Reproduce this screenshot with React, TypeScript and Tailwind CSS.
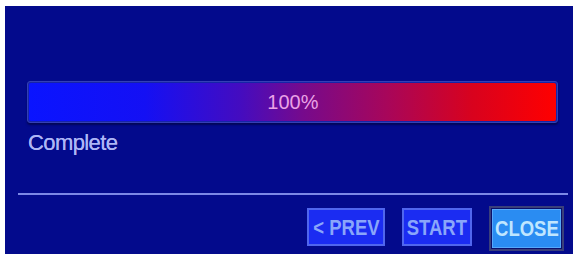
import React from "react";

export default function App() {
  return (
    <div className="w-[576px] h-[254px] bg-white pt-[6px] pl-[5px] overflow-hidden" style={{ fontFamily: '"Liberation Sans", Arial, sans-serif' }}>
      <div className="w-[568px] h-[252px] bg-[#030a8c] flex flex-col">
        <div className="h-[75px] shrink-0" />
        <div className="ml-[22px] w-[531px] h-[42px] rounded-[3px] border border-[#3440b4] p-[1px] bg-[#1624a8] shadow-[0_2px_2px_rgba(0,0,40,0.5)]">
          <div className="w-full h-full rounded-[2px] bg-[linear-gradient(to_right,#0a14ff_0%,#1410f4_22%,#440cc0_40%,#760a8c_52%,#a8065a_68%,#d8021e_84%,#ff0000_100%)] flex items-center justify-center">
            <span className="text-[21px] text-[#eaa2e6] inline-block scale-x-[0.95]">100%</span>
          </div>
        </div>
        <div className="ml-[23px] mt-[7px] text-[22px] leading-[26px] text-[#adb6f6] tracking-[-0.6px] [text-shadow:0_0_0.6px_#adb6f6]">Complete</div>
        <div className="ml-[13px] mt-[37px] w-[550px] h-[2px] bg-[#7c88e6] shrink-0" />
        <div className="flex justify-end items-start gap-[17px] mt-[13px] mr-[9px]">
          <button className="w-[78px] h-[38px] bg-[#1b2cf2] border-2 border-[#5066ee] text-[#8aa6fa] text-[22px] font-bold flex items-center justify-center">
            <span className="inline-block scale-x-[0.84] whitespace-nowrap">&lt; PREV</span>
          </button>
          <button className="w-[70px] h-[38px] bg-[#1b2cf2] border-2 border-[#5066ee] text-[#8aa6fa] text-[22px] font-bold flex items-center justify-center">
            <span className="inline-block scale-x-[0.84]">START</span>
          </button>
          <div className="-mt-[2px] w-[75px] h-[45px] border-2 border-[#3a3f7a] bg-[#0a0f6a] p-[1px]">
            <div className="w-full h-full bg-[#2a8cf2] border border-[#56a8fa] text-[#bfe6ff] text-[22px] font-bold flex items-center justify-center">
              <span className="inline-block scale-x-[0.84]">CLOSE</span>
            </div>
          </div>
        </div>
      </div>
    </div>
  );
}
